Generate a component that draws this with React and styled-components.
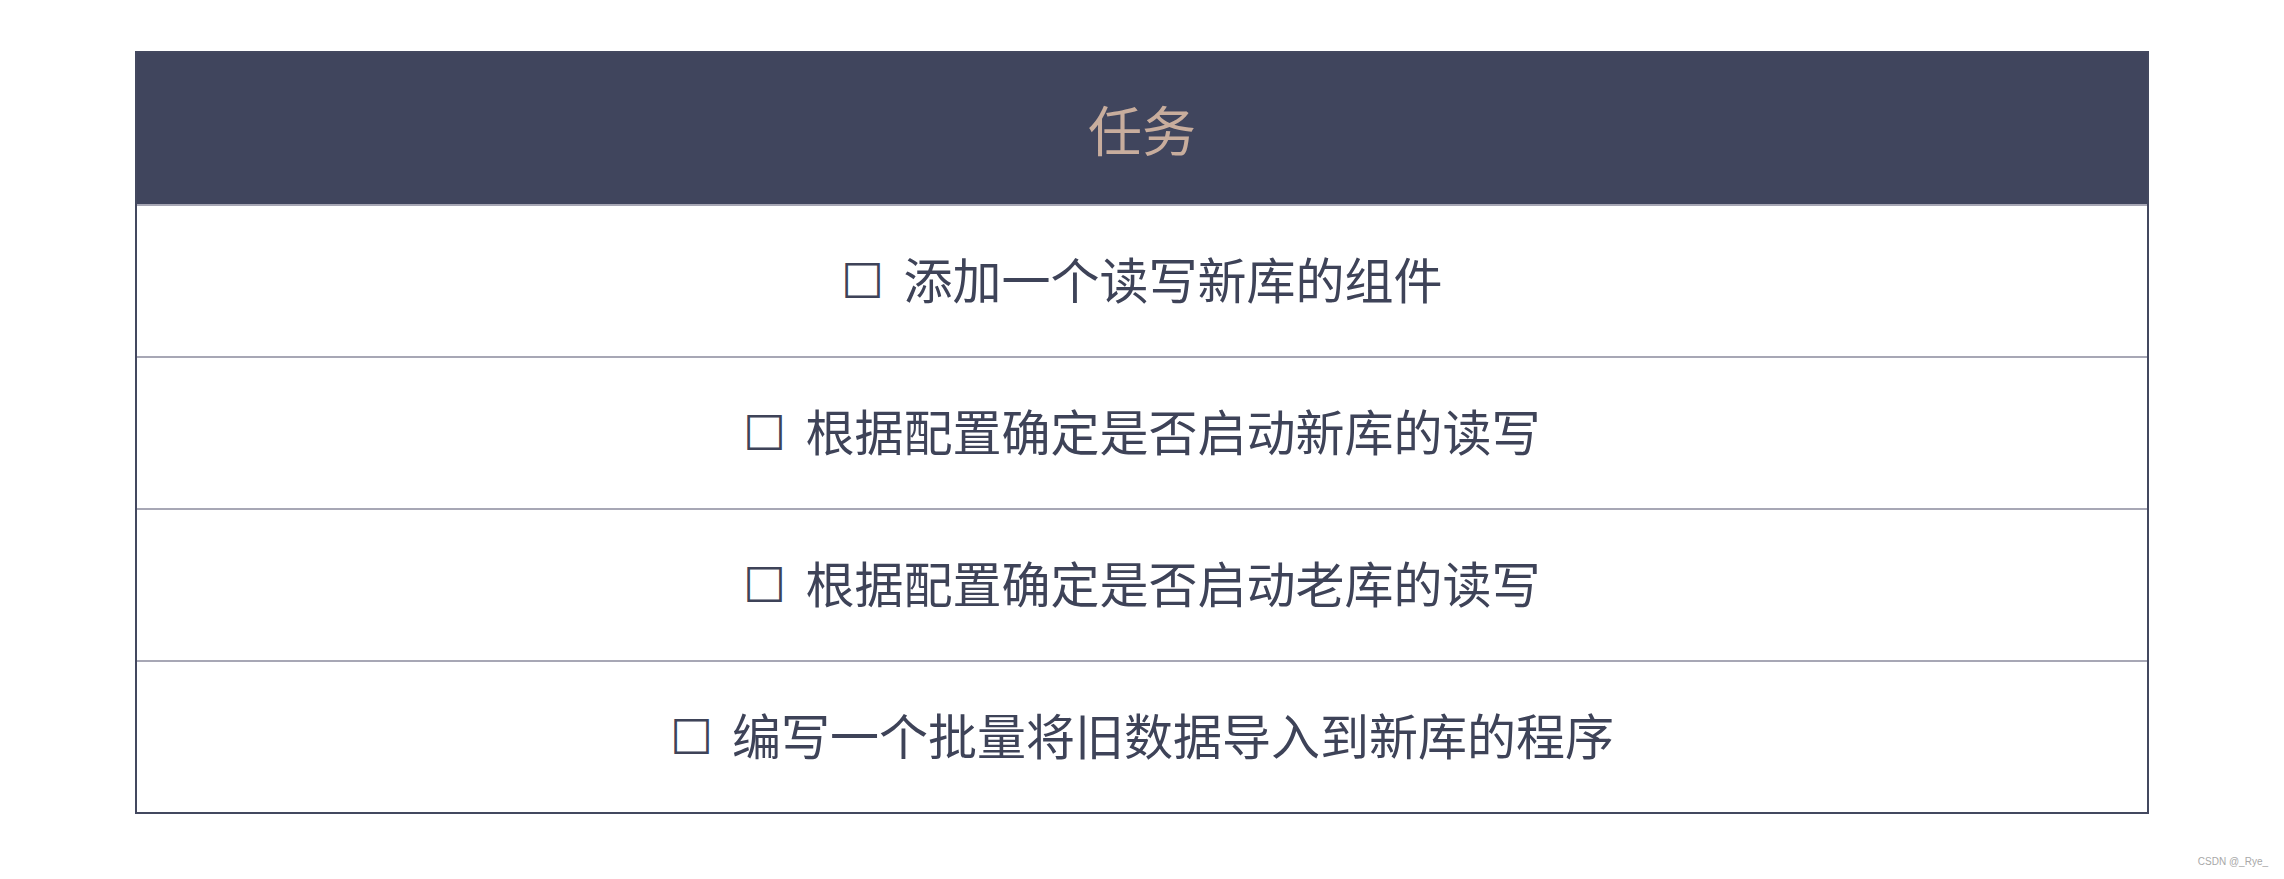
import React from "react";
import styled, { createGlobalStyle } from "styled-components";

const tasks = [
  "添加一个读写新库的组件",
  "根据配置确定是否启动新库的读写",
  "根据配置确定是否启动老库的读写",
  "编写一个批量将旧数据导入到新库的程序",
];

const GlobalStyle = createGlobalStyle`
  html, body {
    margin: 0;
    padding: 0;
    background: #ffffff;
  }
  body {
    font-family: "Noto Sans CJK SC", "Noto Sans", sans-serif;
  }
`;

const Page = styled.div`
  position: relative;
  width: 2284px;
  height: 879px;
  padding: 51px 0 0 135px;
  box-sizing: border-box;
`;

const Table = styled.div`
  width: 2014px;
  box-sizing: border-box;
  border: 2px solid #43485f;
  display: flex;
  flex-direction: column;
`;

const Header = styled.div`
  height: 151px;
  background: #40455d;
  color: #c8ad9d;
  font-size: 54px;
  line-height: 1;
  display: flex;
  align-items: center;
  justify-content: center;
`;

const Row = styled.div`
  height: 152px;
  box-sizing: border-box;
  padding-bottom: 8px;
  border-top: 2px solid #a7a7b5;
  color: #3e4358;
  font-size: 49px;
  line-height: 1;
  display: flex;
  align-items: center;
  justify-content: center;
  gap: 19px;
`;

const Box = styled.span`
  font-size: 48px;
  line-height: 1;
`;

const Watermark = styled.div`
  position: absolute;
  right: 16px;
  bottom: 12px;
  font-family: "Liberation Sans", Arial, sans-serif;
  font-size: 10px;
  color: #a8a8a8;
`;

export default function App() {
  return (
    <Page>
      <GlobalStyle />
      <Table>
        <Header>任务</Header>
        {tasks.map((t) => (
          <Row key={t}>
            <Box>☐</Box>
            <span>{t}</span>
          </Row>
        ))}
      </Table>
      <Watermark>CSDN @_Rye_</Watermark>
    </Page>
  );
}
